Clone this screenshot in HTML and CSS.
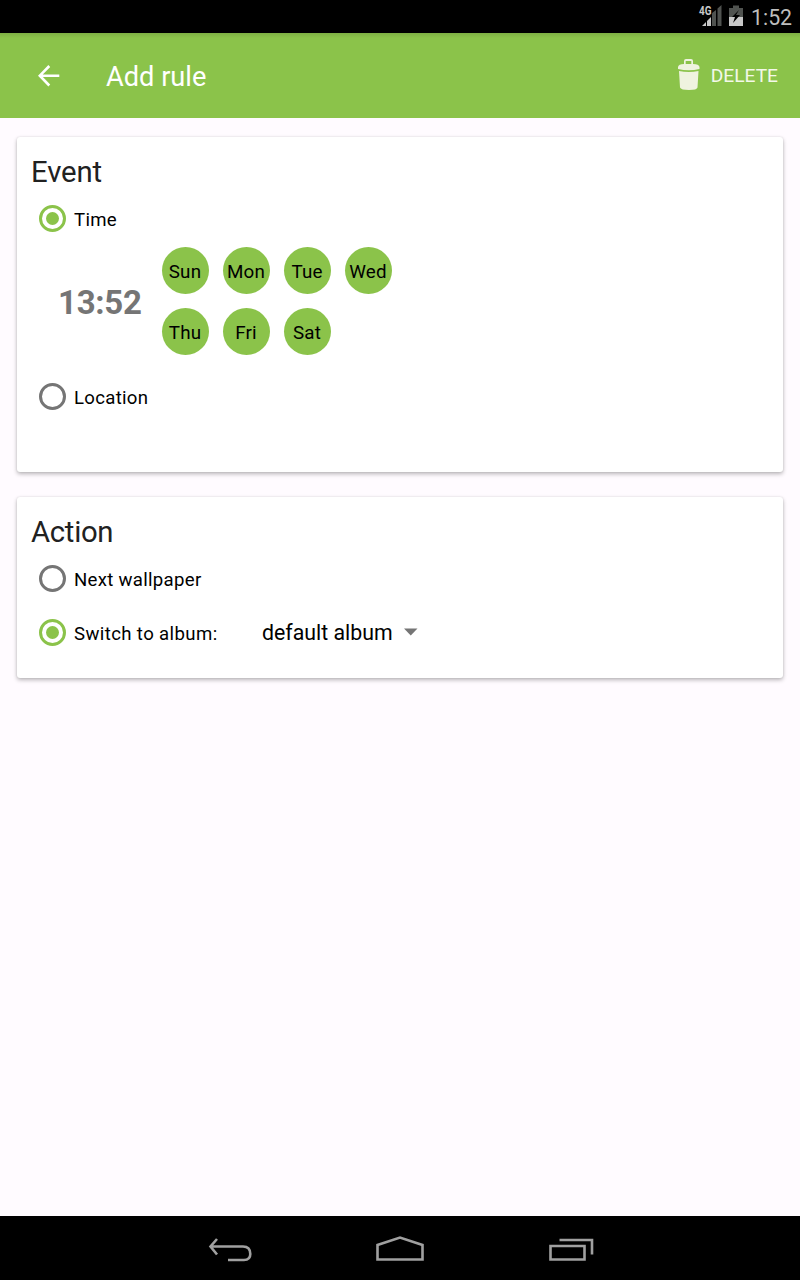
FILE: index.html
```html
<!DOCTYPE html>
<html lang="en">
<head>
<meta charset="utf-8">
<title>Add rule</title>
<link rel="stylesheet" href="styles.css">
</head>
<body>
<div class="status-bar">
  <svg class="status-icons" width="46" height="33" viewBox="0 0 46 33">
    <path fill="#505350" d="M12 13l4-3v16h-4zM17.500 8.500l4-3.500v21h-4z"/>
    <path fill="#c8c8c8" d="M2 26l4-4v4zM7 21l4-4v9H7z"/>
    <text class="network" x="-1" y="15" textLength="12.500" lengthAdjust="spacingAndGlyphs">4G</text>
    <path fill="#505350" d="M29 8h4V5.500h6V8h4v10H29z"/>
    <path fill="#c8c8c8" d="M29 17h14v9H29z"/>
    <path fill="#000" d="M39 10l-7 7h3l-2 6 7-8h-4z"/>
  </svg>
  <span class="clock">1:52</span>
</div>
<header class="app-bar">
  <svg class="back" width="22" height="22" viewBox="0 0 22 22"><path d="M11.300 1L1.800 10.700l9.500 9.800M1.800 10.700H21.300" fill="none" stroke="#fff" stroke-width="2.600"/></svg>
  <h1 class="title">Add rule</h1>
  <button class="delete">
    <svg class="trash" width="22" height="32" viewBox="0 0 22 32" fill="#eff3df"><path fill-rule="evenodd" d="M6 5V2q0-2 2-2h5q2 0 2 2v3q6 0 6.500 3v2Q11 12.500 0 10V8q.5-3 6-3zM7.700 5h5.600V2H7.700z"/><path d="M1 12q10 2 19.500 0l-1 16.500Q19 31 11 31T2 28.500z"/></svg>
    <span class="delete-label">DELETE</span>
  </button>
</header>
<main class="content">
  <section class="card event">
    <h2 class="heading">Event</h2>
    <div class="option"><i class="radio on"></i><span class="label">Time</span></div>
    <div class="schedule">
      <span class="time">13:52</span>
      <div class="days">
        <span class="day">Sun</span><span class="day">Mon</span><span class="day">Tue</span><span class="day">Wed</span>
        <span class="day">Thu</span><span class="day">Fri</span><span class="day">Sat</span>
      </div>
    </div>
    <div class="option"><i class="radio"></i><span class="label">Location</span></div>
  </section>
  <section class="card action">
    <h2 class="heading action-heading">Action</h2>
    <div class="option"><i class="radio"></i><span class="label">Next wallpaper</span></div>
    <div class="option last"><i class="radio on"></i><span class="label switch-label">Switch to album:</span><span class="album">default album</span><svg class="caret" width="14" height="8" viewBox="0 0 14 8"><path d="M0 .5h13.500L6.750 7.500z" fill="#757575"/></svg></div>
  </section>
</main>
<nav class="nav-bar">
  <svg width="800" height="64" viewBox="0 0 800 64" fill="none" stroke="#a0a0a0" stroke-width="2.600">
    <path d="M217 23L210.500 30.500l6.500 8M210 30.500h33q7.300 0 7.300 7.500 0 6-6.300 6H228"/>
    <path d="M377.500 43.500V29L400 21.500 422.500 29v14.500z"/>
    <path d="M550.500 30h34v13.500h-34zM559.500 24H592v14.500"/>
  </svg>
</nav>
</body>
</html>
```
FILE: styles.css
```css
* { box-sizing: border-box; }
body {
  margin: 0;
  width: 800px;
  height: 1280px;
  display: flex;
  flex-direction: column;
  overflow: hidden;
  background: #fffbff;
  color: #000;
  font-family: Roboto, "Liberation Sans", sans-serif;
}
.status-bar {
  height: 33px;
  background: #000;
  display: flex;
  justify-content: flex-end;
  padding-right: 7px;
}
.status-icons { margin-right: 5px; overflow: visible; }
.network { font: bold 12px Roboto, sans-serif; fill: #c8c8c8; stroke: #000; stroke-width: 2px; paint-order: stroke; }
.clock { width: 42px; white-space: nowrap; font-size: 21.300px; line-height: 36px; color: #bebebe; }
.app-bar {
  height: 85px;
  background: linear-gradient(#7eaf43, #8bc34a 5px);
  display: flex;
  align-items: center;
  padding: 0 22px 0 38px;
  color: #fff;
}
.title { margin: 2px auto 0 46px; font-size: 27.200px; font-weight: 400; line-height: 32px; letter-spacing: 0; }
.delete { display: flex; align-items: center; gap: 11px; padding: 0; border: 0; background: none; color: #f3f8e9; }
.trash { margin-top: -2px; }
.delete-label { font: 19.200px/24px Roboto, sans-serif; }
.content { flex: 1; padding: 19px 17px; display: flex; flex-direction: column; gap: 25px; }
.card { background: #fff; border-radius: 3px; box-shadow: 0 2px 4px rgba(0,0,0,.28), 0 0 2px rgba(0,0,0,.1); padding: 17px 14px 0; }
.event { height: 335px; }
.action { height: 181px; }
.heading { margin: 0; color: #212121; font-size: 29.300px; line-height: 36px; font-weight: 400; letter-spacing: -.1px; }
.action-heading { letter-spacing: -.3px; }
.option { height: 27px; margin: 15px 0 0 8px; display: flex; align-items: center; }
.radio { width: 27px; height: 27px; border: 3px solid #757575; border-radius: 50%; display: grid; place-items: center; }
.on { border-color: #8bc34a; }
.on::before { content: ""; width: 13px; height: 13px; border-radius: 50%; background: #8bc34a; }
.label { margin-left: 8px; font-size: 18.600px; line-height: 28px; padding-top: 2px; letter-spacing: .3px; }
.schedule { margin: 15px 0 0 27px; display: flex; }
.time { width: 104px; font-size: 33px; font-weight: 700; line-height: 112px; height: 108px; color: #757575; letter-spacing: -.3px; }
.days { display: grid; grid-template-columns: repeat(4, 47px); gap: 14px; align-content: start; }
.day { height: 47px; border-radius: 50%; background: #8bc34a; text-align: center; font-size: 18.800px; line-height: 50px; letter-spacing: .2px; padding-right: 1px; }
.schedule + .option { margin-top: 28px; }
.last { margin-top: 27px; }
.switch-label { width: 151px; letter-spacing: .38px; }
.album { margin-left: 37px; font-size: 21.300px; line-height: 28px; width: 142px; white-space: nowrap; }
.caret { display: block; margin-top: -2px; }
.nav-bar { height: 64px; background: #000; }
.nav-bar svg { display: block; }
```
